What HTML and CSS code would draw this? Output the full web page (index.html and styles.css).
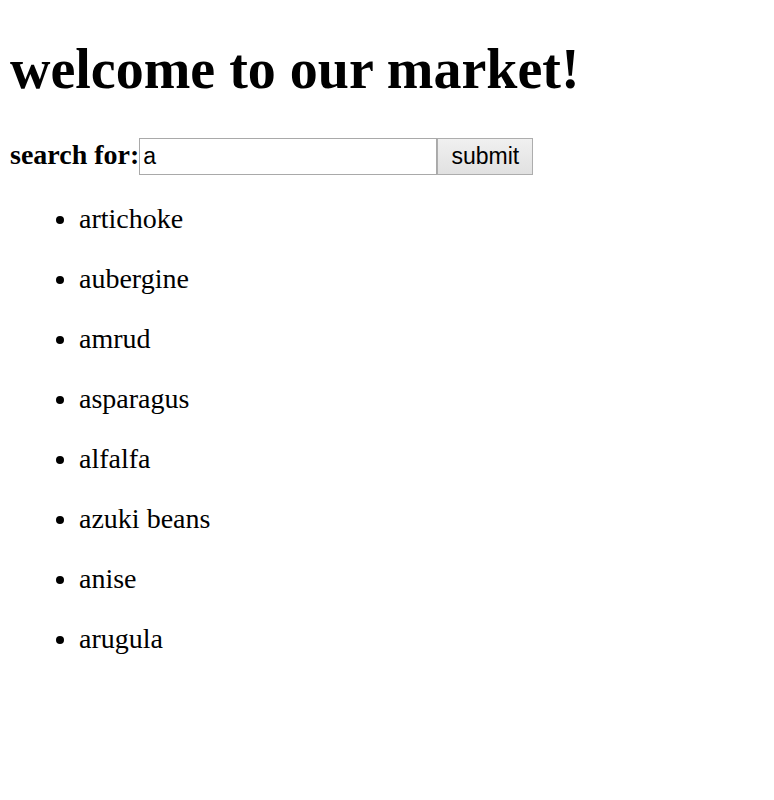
FILE: index.html
```html
<!DOCTYPE html>
<html>
<head>
<meta charset="utf-8">
<title>market</title>
<link rel="stylesheet" href="styles.css">
</head>
<body>
<h1 class="title">welcome to our market!</h1>
<form class="search"><label class="search-label" for="q">search for:</label><input class="search-input" id="q" type="text" value="a"><button class="search-button" type="button">submit</button></form>
<ul class="results">
<li>artichoke</li>
<li>aubergine</li>
<li>amrud</li>
<li>asparagus</li>
<li>alfalfa</li>
<li>azuki beans</li>
<li>anise</li>
<li>arugula</li>
</ul>
</body>
</html>
```

FILE: styles.css
```css
body {
  margin: 8px 8px 8px 10px;
  font-family: "Liberation Serif", "Times New Roman", serif;
  font-size: 28px;
  color: #000;
  background: #fff;
}

.title {
  font-size: 56px;
  font-weight: bold;
  margin: 28.5px 0 37.5px;
}

.search {
  margin: 0;
}

.search-label {
  font-weight: bold;
}

.search-input {
  font-family: "Liberation Sans", Arial, sans-serif;
  font-size: 23px;
  width: 298px;
  height: 37px;
  box-sizing: border-box;
  margin: 0;
  padding: 1px 3px;
  border: 1px solid #a9a9a9;
  color: #000;
  background: #fff;
  vertical-align: baseline;
}

.search-button {
  font-family: "Liberation Sans", Arial, sans-serif;
  font-size: 23px;
  width: 96px;
  height: 37px;
  box-sizing: border-box;
  margin: 0;
  padding: 0 6px;
  border: 1px solid #adadad;
  background: linear-gradient(#f0f0f0, #e1e1e1);
  color: #000;
  vertical-align: baseline;
}

.results {
  margin: 28px 0;
  padding-left: 69px;
}

.results li {
  margin: 28px 0;
}
```
